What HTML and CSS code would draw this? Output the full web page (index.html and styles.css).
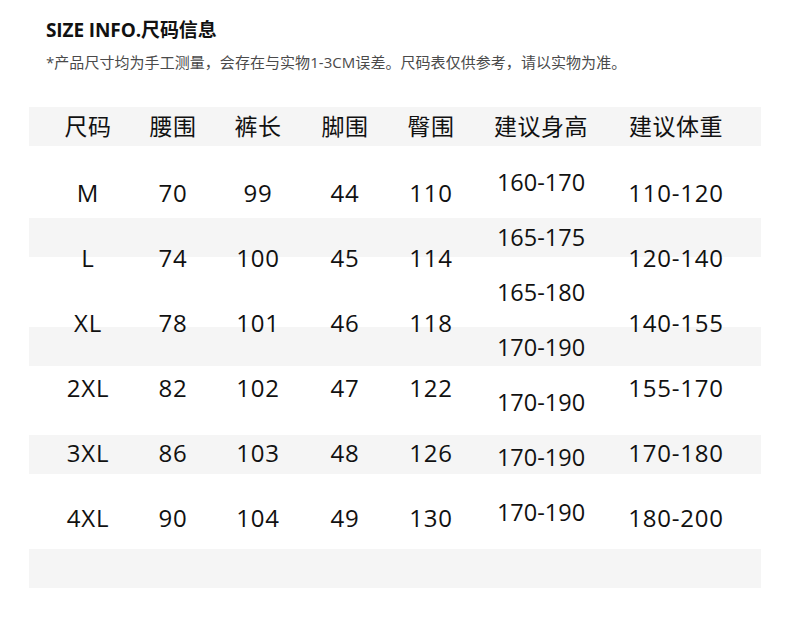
FILE: index.html
```html
<!DOCTYPE html>
<html lang="zh-CN">
<head>
<meta charset="utf-8">
<title>尺码信息</title>
<link rel="stylesheet" href="styles.css">
</head>
<body>
<div class="page">
  <header class="head">
    <h1 class="title">SIZE INFO.尺码信息</h1>
    <p class="note">*产品尺寸均为手工测量，会存在与实物1-3CM误差。尺码表仅供参考，请以实物为准。</p>
  </header>

  <section class="table">
    <div class="stripes">
      <div class="stripe"></div>
      <div class="stripe"></div>
      <div class="stripe"></div>
      <div class="stripe"></div>
      <div class="stripe"></div>
    </div>

    <div class="rows">
      <div class="thead">
        <div class="th">尺码</div>
        <div class="th">腰围</div>
        <div class="th">裤长</div>
        <div class="th">脚围</div>
        <div class="th">臀围</div>
        <div class="th">建议身高</div>
        <div class="th">建议体重</div>
      </div>
      <div class="tbody">
        <div class="col">
          <div class="cell">M</div><div class="cell">L</div><div class="cell">XL</div>
          <div class="cell">2XL</div><div class="cell">3XL</div><div class="cell">4XL</div>
        </div>
        <div class="col">
          <div class="cell">70</div><div class="cell">74</div><div class="cell">78</div>
          <div class="cell">82</div><div class="cell">86</div><div class="cell">90</div>
        </div>
        <div class="col">
          <div class="cell">99</div><div class="cell">100</div><div class="cell">101</div>
          <div class="cell">102</div><div class="cell">103</div><div class="cell">104</div>
        </div>
        <div class="col">
          <div class="cell">44</div><div class="cell">45</div><div class="cell">46</div>
          <div class="cell">47</div><div class="cell">48</div><div class="cell">49</div>
        </div>
        <div class="col">
          <div class="cell">110</div><div class="cell">114</div><div class="cell">118</div>
          <div class="cell">122</div><div class="cell">126</div><div class="cell">130</div>
        </div>
        <div class="col col-height">
          <div class="hcell">160-170</div><div class="hcell">165-175</div><div class="hcell">165-180</div>
          <div class="hcell">170-190</div><div class="hcell">170-190</div><div class="hcell">170-190</div>
          <div class="hcell">170-190</div>
        </div>
        <div class="col">
          <div class="cell">110-120</div><div class="cell">120-140</div><div class="cell">140-155</div>
          <div class="cell">155-170</div><div class="cell">170-180</div><div class="cell">180-200</div>
        </div>
      </div>
    </div>
  </section>
</div>
</body>
</html>
```

FILE: styles.css
```css
* { box-sizing: border-box; }

html, body {
  margin: 0;
  padding: 0;
  background: #ffffff;
}

body {
  font-family: "Open Sans", "Noto Sans CJK SC", sans-serif;
  color: #151515;
  width: 790px;
  height: 622px;
  overflow: hidden;
}

.page {
  padding-top: 18px;
}

.head {
  padding-left: 46px;
}

.title {
  margin: 0;
  font-size: 19px;
  line-height: 24px;
  font-weight: 700;
  color: #111;
  letter-spacing: -0.1px;
}

.note {
  margin: 10px 0 0 0;
  font-size: 15px;
  line-height: 20px;
  color: #4a4a4a;
  letter-spacing: 0.05px;
}

.table {
  margin-top: 35px;
  margin-left: 29px;
  width: 732px;
  display: grid;
}

.stripes,
.rows {
  grid-area: 1 / 1;
}

.stripes {
  display: flex;
  flex-direction: column;
}

.stripe {
  height: 39px;
  background: #f5f5f5;
}

.stripe:nth-child(2) { margin-top: 72px; }
.stripe:nth-child(3) { margin-top: 70px; }
.stripe:nth-child(4) { margin-top: 69px; }
.stripe:nth-child(5) { margin-top: 75px; }

.thead,
.tbody {
  display: grid;
  grid-template-columns: 84px 86px 84px 90px 82px 138px 132px;
  padding-left: 17px;
}

.thead {
  height: 39px;
  align-items: center;
}

.th {
  text-align: center;
  font-size: 23px;
  line-height: 1;
  color: #111;
  letter-spacing: 0.5px;
}

.col {
  display: flex;
  flex-direction: column;
  padding-top: 14px;
}

.cell {
  height: 65px;
  display: flex;
  align-items: center;
  justify-content: center;
  font-size: 24px;
  line-height: 1;
  letter-spacing: 0.8px;
  color: #111;
}

.col-height {
  padding-top: 9px;
}

.hcell {
  height: 55px;
  display: flex;
  align-items: center;
  justify-content: center;
  font-size: 23.5px;
  line-height: 1;
  color: #111;
}
```
